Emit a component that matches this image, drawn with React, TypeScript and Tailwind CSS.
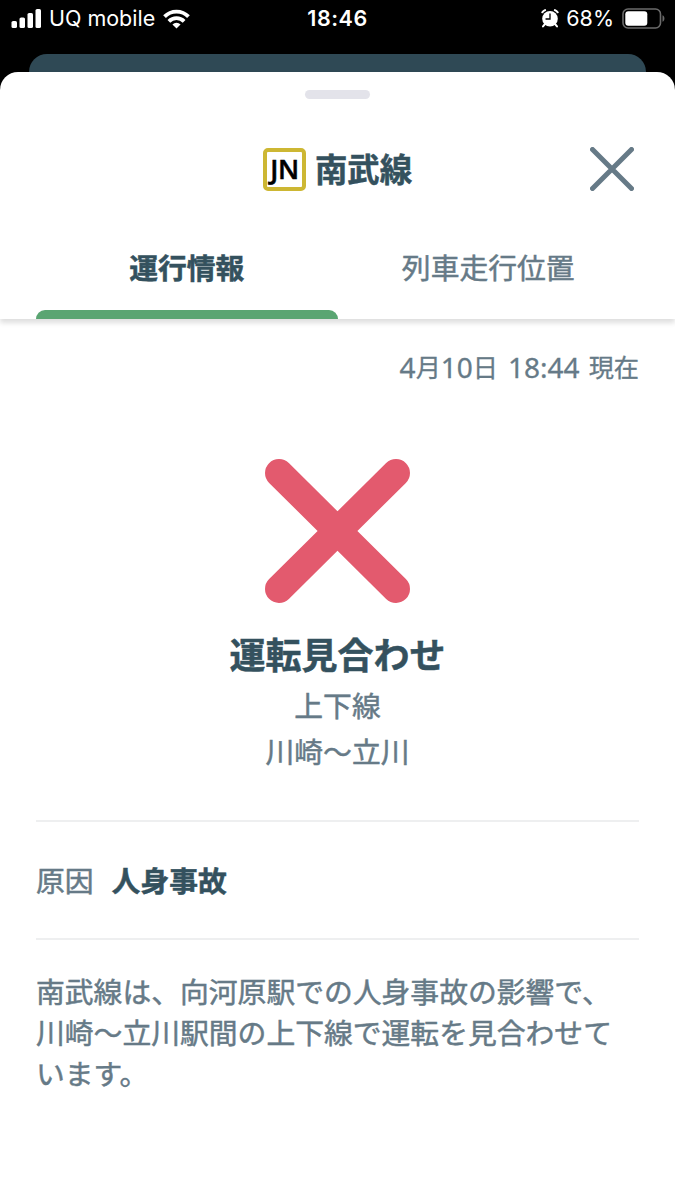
type Tab = {
  id: string;
  label: string;
  active: boolean;
};

const tabs: Tab[] = [
  { id: "status", label: "運行情報", active: true },
  { id: "position", label: "列車走行位置", active: false },
];

const message = [
  "南武線は、向河原駅での人身事故の影響で、",
  "川崎〜立川駅間の上下線で運転を見合わせて",
  "います。",
];

function SignalIcon() {
  return (
    <svg width="31" height="20" viewBox="0 0 31 20" fill="#fff">
      <rect x="0.5" y="12" width="5.5" height="7" rx="1.6" />
      <rect x="8.5" y="8.5" width="5.5" height="10.5" rx="1.6" />
      <rect x="16.5" y="4" width="5.5" height="15" rx="1.6" />
      <rect x="24.5" y="0" width="5.5" height="19" rx="1.6" />
    </svg>
  );
}

function WifiIcon() {
  return (
    <svg width="27" height="20" viewBox="0 0 28 20">
      <g fill="none" stroke="#fff" strokeWidth="4">
        <path d="M1.6 7.6a17.4 17.4 0 0 1 24.8 0" />
        <path d="M6.1 12.4a11.2 11.2 0 0 1 15.8 0" />
      </g>
      <path d="M14 19.8l-4.2-4.2a6.1 6.1 0 0 1 8.4 0z" fill="#fff" />
    </svg>
  );
}

function AlarmIcon() {
  return (
    <svg width="18" height="19" viewBox="0 0 18 19">
      <circle cx="9" cy="9.7" r="7.8" fill="#fff" />
      <g stroke="#fff" strokeWidth="2" strokeLinecap="round">
        <path d="M1.3 3.3a8 8 0 0 1 2.8-2.2M16.7 3.3a8 8 0 0 0-2.8-2.2" fill="none" />
        <path d="M4 15l-2 2.4M14 15l2 2.4" />
      </g>
      <path d="M9 5v5H5" fill="none" stroke="#000" strokeWidth="1.3" strokeLinecap="round" />
    </svg>
  );
}

function BatteryIcon() {
  return (
    <svg width="44" height="22" viewBox="0 0 44 22">
      <rect x="1" y="1" width="37.5" height="19" rx="5" fill="none" stroke="#6b6b6b" strokeWidth="1.6" />
      <rect x="3.3" y="3.3" width="22" height="14.4" rx="3" fill="#fff" />
      <path d="M40.5 7.2c2.6 1 2.6 5.6 0 6.6z" fill="#6b6b6b" />
    </svg>
  );
}

function StatusBar() {
  return (
    <div className="grid h-9 grid-cols-3 items-center pt-px font-['Inter',sans-serif] text-[21.5px] text-white">
      <div className="flex items-center pl-[11px]">
        <SignalIcon />
        <span className="ml-[7px] tracking-[-0.02px] whitespace-nowrap">UQ mobile</span>
        <span className="ml-2">
          <WifiIcon />
        </span>
      </div>
      <div className="text-center font-semibold tracking-[0.5px]">18:46</div>
      <div className="flex items-center justify-end pr-[9px]">
        <AlarmIcon />
        <span className="mr-2 ml-[7px]">68%</span>
        <BatteryIcon />
      </div>
    </div>
  );
}

export default function App() {
  return (
    <div className="flex h-[1200px] w-[675px] flex-col overflow-hidden bg-black font-['Noto_Sans_CJK_JP',sans-serif] text-[#667a87]">
      <StatusBar />
      <div className="mx-[29px] mt-[18px] h-[18px] shrink-0 rounded-t-[18px] bg-[#2f4955]" />

      <main className="flex flex-1 flex-col rounded-t-[18px] bg-white [-webkit-text-stroke:0.5px]">
        <header className="h-[247px] shrink-0 rounded-t-[18px] shadow-[0_4px_5px_rgba(0,0,0,0.13)]">
          <div className="mx-auto h-[44px] pt-[18px]">
            <div className="mx-auto h-[9px] w-[65px] rounded-full bg-[#e3e3ea]" />
          </div>
          <div className="grid h-[106px] grid-cols-[1fr_auto_1fr] items-center">
            <h1 className="col-start-2 flex items-center gap-[9px]">
              <span className="flex size-[43px] items-center justify-center rounded-[5px] border-4 border-[#cdb733] font-['Open_Sans',sans-serif] text-[27px] font-semibold tracking-[-0.5px] text-black">
                JN
              </span>
              <span className="pb-0.5 text-[32.4px] leading-none font-bold text-[#34515e]">南武線</span>
            </h1>
            <button type="button" aria-label="閉じる" className="mr-[41px] justify-self-end">
              <svg width="44" height="44" viewBox="0 0 44 44" stroke="#667a87" strokeWidth="5" strokeLinecap="round">
                <path d="M2.5 2.5l39 39M41.5 2.5l-39 39" />
              </svg>
            </button>
          </div>
          <nav className="grid h-[97px] grid-cols-2 px-9">
            {tabs.map((tab) => (
              <button
                key={tab.id}
                type="button"
                className={
                  tab.active
                    ? "flex flex-col items-center justify-between text-[28.8px] font-bold text-[#34515e]"
                    : "flex flex-col items-center justify-between text-[28.8px]"
                }
              >
                <span className="pt-[23px] leading-[44px]">{tab.label}</span>
                {tab.active ? (
                  <span className="h-[9px] w-full rounded-t-[9px] bg-[#5aa572]" />
                ) : null}
              </button>
            ))}
          </nav>
        </header>

        <div className="px-9">
          <p className="flex justify-end pt-7 font-['Noto_Sans','Noto_Sans_CJK_JP',sans-serif] text-[28px] leading-10 [-webkit-text-stroke:0.3px]">
            <span>4</span>
            <span className="text-[25.2px]">月</span>
            <span>10</span>
            <span className="text-[25.2px]">日</span>
            <span className="mr-[9px] ml-[10px]">18:44</span>
            <span className="text-[25.2px]">現在</span>
          </p>

          <section className="flex flex-col items-center pt-[72px] text-[28.8px]">
            <svg width="145" height="144" viewBox="0 0 145 144" stroke="#e35a6e" strokeWidth="28" strokeLinecap="round">
              <path d="M14 14l117 116M131 14l-117 116" />
            </svg>
            <h2 className="mt-[23px] text-[36px] leading-[54px] font-bold text-[#34515e]">運転見合わせ</h2>
            <p className="mt-0.5 leading-[46px]">上下線</p>
            <p className="leading-[46px]">川崎〜立川</p>
          </section>

          <dl className="mt-[46px] flex h-[120px] items-center border-y-2 border-[#eeeff0] text-[28.8px]">
            <dt>原因</dt>
            <dd className="ml-[18px] font-bold text-[#34515e]">人身事故</dd>
          </dl>

          <p className="pt-[30px] text-[28.8px] leading-[41px] whitespace-nowrap">
            {message.map((line) => (
              <span key={line} className="block">
                {line}
              </span>
            ))}
          </p>
        </div>
      </main>
    </div>
  );
}
